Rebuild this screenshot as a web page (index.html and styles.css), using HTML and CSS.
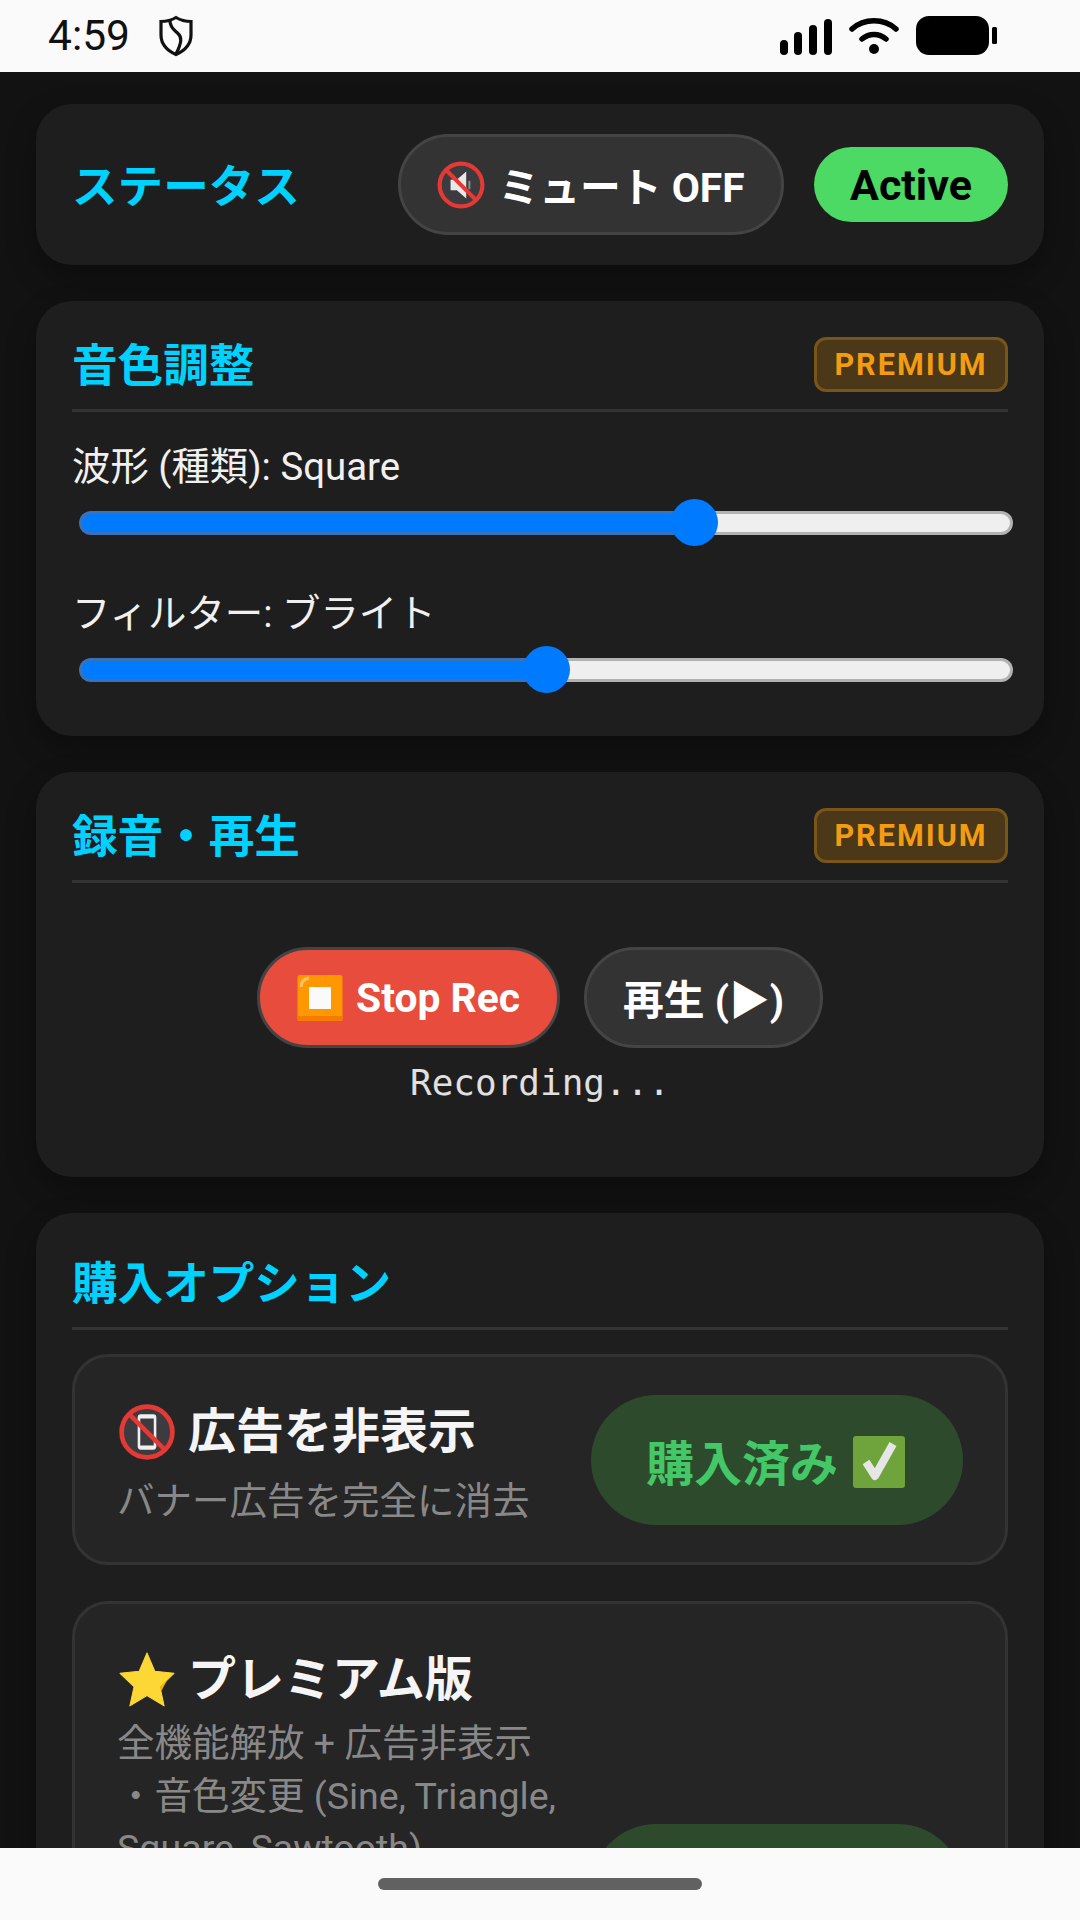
FILE: index.html
```html
<!DOCTYPE html>
<html lang="ja">
<head>
<meta charset="utf-8">
<title>Synth</title>
<link rel="stylesheet" href="styles.css">
</head>
<body>
<div class="app">
  <header class="statusbar">
    <div class="status-left">
      <span class="clock">4:59</span>
      <svg class="shield" viewBox="0 0 36 42"><path d="M18 2.500C23 5.500 28 6.500 33 6.500V20C33 29 27 35.500 18 39.500C9 35.500 3 29 3 20V6.500C8 6.500 13 5.500 18 2.500Z" fill="none" stroke="#111" stroke-width="3.200"/><path d="M12 6C12 13 17 15.500 20 18.500C24 22 24 27 18 39" fill="none" stroke="#111" stroke-width="3.200"/></svg>
    </div>
    <div class="status-right">
      <svg class="signal" viewBox="0 0 52 36"><rect x="0" y="21" width="8" height="15" rx="4"/><rect x="14" y="13" width="8" height="23" rx="4"/><rect x="29" y="6" width="8" height="30" rx="4"/><rect x="44" y="0" width="8" height="36" rx="4"/></svg>
      <svg class="wifi" viewBox="0 0 50 38"><path d="M3 12C15 1 35 1 47 12M13 22C20 16 30 16 37 22" fill="none" stroke="#000" stroke-width="5.500" stroke-linecap="round"/><circle cx="25" cy="32" r="5"/></svg>
      <svg class="battery" viewBox="0 0 82 40"><rect x="0" y="0" width="73" height="39" rx="13"/><rect x="76" y="11" width="5" height="17" rx="1.500"/></svg>
    </div>
  </header>

  <main class="content">
    <section class="card card-status">
      <h2 class="card-title">ステータス</h2>
      <button class="pill pill-mute">
        <svg class="emoji emoji-mute" viewBox="0 0 46 46"><circle cx="23" cy="23" r="20.500" fill="#3c3c40" stroke="#e53935" stroke-width="4"/><path d="M13 18H19L28 10V36L19 28H13Z" fill="#e8e8e8"/><path d="M31 19V27" stroke="#8a8a8a" stroke-width="2"/><path d="M9 9L37 37" stroke="#e53935" stroke-width="4"/></svg>
        ミュート OFF
      </button>
      <span class="active-badge">Active</span>
    </section>

    <section class="card card-tone">
      <div class="card-head">
        <h2 class="card-title">音色調整</h2>
        <span class="premium">PREMIUM</span>
      </div>
      <div class="control">
        <div class="control-label">波形 (種類): Square</div>
        <div class="slider"><div class="slider-fill" style="width:65.800%"></div><div class="slider-rest"></div><div class="slider-thumb" style="left:65.800%"></div></div>
      </div>
      <div class="control">
        <div class="control-label">フィルター: ブライト</div>
        <div class="slider"><div class="slider-fill" style="width:50%"></div><div class="slider-rest"></div><div class="slider-thumb" style="left:50%"></div></div>
      </div>
    </section>

    <section class="card card-rec">
      <div class="card-head">
        <h2 class="card-title">録音・再生</h2>
        <span class="premium">PREMIUM</span>
      </div>
      <div class="rec-buttons">
        <button class="pill pill-stop">
          <svg class="emoji" viewBox="0 0 46 46"><rect x="0.500" y="0" width="45" height="46" rx="2.500" fill="#ff9800"/><path d="M0.500 41H45.500V43.500A2.500 2.500 0 0 1 43 46H3A2.500 2.500 0 0 1 0.500 43.500Z" fill="#f57c00"/><path d="M4 12C4 7 7 4 12 3" stroke="#ffc266" stroke-width="3" fill="none"/><rect x="12" y="12" width="22" height="22" fill="#fafafa"/></svg>
          Stop Rec
        </button>
        <button class="pill pill-play">再生 (▶)</button>
      </div>
      <div class="rec-state">Recording...</div>
    </section>

    <section class="card card-buy">
      <h2 class="card-title buy-title">購入オプション</h2>
      <article class="option">
        <div class="option-text">
          <h3 class="option-name">
            <svg class="emoji emoji-lg" viewBox="0 0 54 54"><circle cx="27" cy="27" r="24.500" fill="#3c3c40" stroke="#e53935" stroke-width="4.500"/><rect x="18" y="10" width="18" height="34" rx="3" fill="#f0f0f0"/><rect x="20.500" y="14" width="13" height="26" fill="#3c3c40"/><path d="M10 10L44 44" stroke="#e53935" stroke-width="4.500"/></svg>
            広告を非表示
          </h3>
          <p class="option-desc">バナー広告を完全に消去</p>
        </div>
        <button class="buy-btn">購入済み
          <svg class="emoji emoji-check" viewBox="0 0 54 54"><rect x="1" y="1" width="52" height="52" rx="3" fill="#6fa33c"/><path d="M14 27L23 41L41 9" stroke="#e6e6e6" stroke-width="8" fill="none" stroke-linejoin="round"/></svg>
        </button>
      </article>
      <article class="option option-premium">
        <div class="option-text">
          <h3 class="option-name">
            <svg class="emoji emoji-lg" viewBox="0 0 54 54"><path d="M27 1L34.500 18.500L53 20.500L39.500 33.500L43.500 52L27 42L10.500 52L14.500 33.500L1 20.500L19.500 18.500Z" fill="#fdd835" stroke="#fdd835" stroke-linejoin="round"/><path d="M53 20.500L39.500 33.500L40.500 38L46 28Z" fill="#f4b400"/></svg>
            プレミアム版
          </h3>
          <p class="option-desc">全機能解放 + 広告非表示<br>・音色変更 (Sine, Triangle, Square, Sawtooth)</p>
        </div>
        <button class="buy-btn">購入済み</button>
      </article>
    </section>
  </main>

  <footer class="navbar"><div class="home-pill"></div></footer>
</div>
</body>
</html>
```

FILE: styles.css
```css
* { box-sizing: border-box; }
html, body { margin: 0; padding: 0; }
body { font-family: Roboto, "Noto Sans CJK JP", sans-serif; background: #121212; color: #f5f5f5; }
.app { width: 1080px; height: 1920px; display: flex; flex-direction: column; overflow: hidden; }

.statusbar { flex: 0 0 72px; height: 72px; background: #fafafa; display: flex; justify-content: space-between; align-items: center; padding: 0 48px; color: #111; }
.status-left { display: flex; align-items: center; gap: 28px; }
.clock { font-size: 42.500px; line-height: 72px; font-weight: 400; }
.shield { width: 36px; height: 42px; }
.status-right { display: flex; align-items: center; gap: 17px; padding-right: 34px; }
.signal { width: 52px; height: 36px; margin-top: 2px; }
.wifi { width: 50px; height: 38px; }
.battery { width: 82px; height: 40px; }

.content { flex: 1 1 0; min-height: 0; overflow: hidden; background: #121212; padding: 32px 36px 0; display: flex; flex-direction: column; gap: 36px; }
.card { background: #1e1e1e; border-radius: 36px; padding: 36px; box-shadow: 0 12px 30px rgba(0,0,0,.3); flex: none; }
.card-status { display: flex; align-items: center; height: 161px; padding: 30px 36px; }
.card-status .card-title { flex: 1; margin-top: 1px; }
.card-title { margin: 0; padding-top: 4px; font-size: 45.600px; line-height: 51px; font-weight: 700; color: #00d2ff; }
.card-head { display: flex; justify-content: space-between; align-items: center; padding-bottom: 17px; border-bottom: 3px solid #333; }

.pill { display: inline-flex; align-items: center; justify-content: center; height: 101px; border-radius: 51px; border: 3px solid #444; background: #333; color: #fff; font: 700 40.800px Roboto, "Noto Sans CJK JP", sans-serif; padding: 0; white-space: nowrap; }
.pill-mute { width: 386px; gap: 13px; margin-right: 30px; }
.emoji { width: 46px; height: 46px; flex: none; display: inline-block; }
.emoji-mute { width: 48px; height: 48px; }
.active-badge { width: 194px; height: 75px; border-radius: 38px; background: #4cd964; color: #000; font-size: 43px; font-weight: 700; display: flex; align-items: center; justify-content: center; }

.premium { width: 194px; height: 55px; border-radius: 12px; border: 3px solid #7a5519; background: #4a3819; color: #f39c12; font-size: 30.600px; font-weight: 700; letter-spacing: 2px; display: flex; align-items: center; justify-content: center; }

.card-tone { padding-bottom: 54px; }
.control { margin-top: 32px; }
.control + .control { margin-top: 56px; }
.control-label { font-size: 38.400px; line-height: 46px; color: #f0f0f0; }
.slider { position: relative; display: flex; height: 24px; margin: 21px -5px 0 7px; }
.slider-fill { height: 24px; background: #007aff; border: 3px solid #3a72b8; border-right: 0; border-radius: 12px 0 0 12px; flex: none; }
.slider-rest { flex: 1; height: 24px; background: #efefef; border: 3px solid #b2b2b2; border-left: 0; border-radius: 0 12px 12px 0; }
.slider-thumb { position: absolute; top: -12px; width: 47px; height: 47px; margin-left: -23px; border-radius: 50%; background: #007aff; }

.card-rec { height: 405px; }
.rec-buttons { display: flex; justify-content: center; gap: 24px; margin-top: 64px; }
.pill-stop { width: 303px; background: #e74c3c; gap: 13px; }
.pill-play { width: 239px; }
.rec-state { margin-top: 12px; text-align: center; font: 36px/46px "DejaVu Sans Mono", monospace; color: #e0e0e0; }

.buy-title { margin-top: 6px; padding-bottom: 17px; border-bottom: 3px solid #333; }
.card-buy { padding-bottom: 60px; }
.option { display: flex; align-items: center; gap: 20px; background: #252525; border: 3px solid #333; border-radius: 36px; padding: 36px 42px; margin-top: 24px; height: 211px; }
.option-premium { margin-top: 36px; height: 576px; }
.option-premium .option-text { align-self: flex-start; padding-top: 11px; }
.option-premium .option-desc { margin-top: 8px; line-height: 52.500px; }
.option-text { flex: 1; min-width: 0; padding-top: 12px; }
.option-name { margin: 0; display: flex; align-items: center; gap: 13px; font-size: 48px; line-height: 58px; font-weight: 700; color: #f5f5f5; }
.emoji-lg { width: 56px; height: 56px; margin-left: 2px; }
.option-desc { margin: 14px 0 0; font-size: 37.500px; line-height: 53px; color: #888; }
.buy-btn { flex: none; width: 372px; height: 130px; border: 0; border-radius: 65px; background: #2d4a2d; color: #44c767; font: 700 48px Roboto, "Noto Sans CJK JP", sans-serif; display: flex; align-items: center; justify-content: center; gap: 14px; padding: 0 2px 0 0; }
.emoji-check { width: 54px; height: 54px; margin-top: 4px; }

.navbar { flex: 0 0 72px; height: 72px; background: #fafafa; display: flex; align-items: center; justify-content: center; }
.home-pill { width: 324px; height: 12px; border-radius: 6px; background: #616161; }
```
